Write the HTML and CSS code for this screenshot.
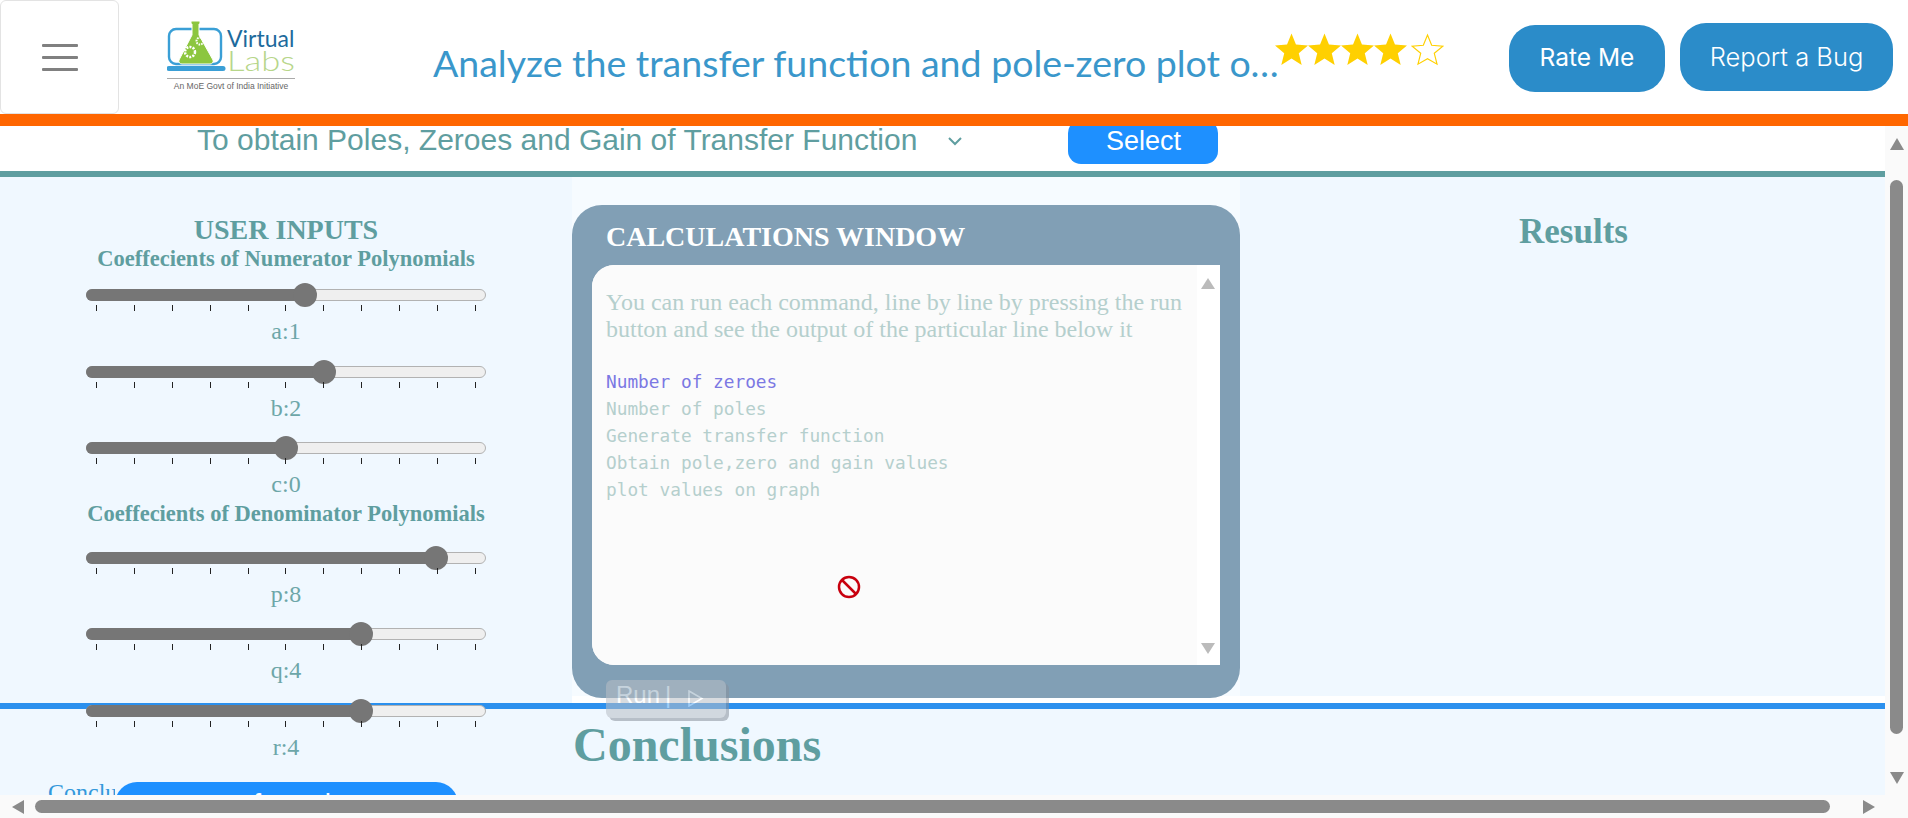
FILE: index.html
```html
<!DOCTYPE html>
<html lang="en">
<head>
    <meta charset="UTF-8">
    <meta name="viewport" content="width=device-width, initial-scale=1.0">
    <title>Virtual Labs</title>
    <link rel="stylesheet" href="styles.css">
</head>
<body>

    <header class="topbar">
        <button class="menu-btn" aria-label="Menu">
            <span></span><span></span><span></span>
        </button>
        <div class="logo">
            <svg width="132" height="72" viewBox="0 0 132 72">
                <rect x="2" y="8" width="52" height="35" rx="7" fill="none" stroke="#3a9fd6" stroke-width="2.4"/>
                <path d="M2 45h54a2.500 2.500 0 0 1 0 5H2a2.500 2.500 0 0 1 0-5z" fill="#3a9fd6"/>
                <path d="M24 0h9v3h-1v11l14 25a3 3 0 0 1-3 4H15a3 3 0 0 1-3-4l13-25V3h-1z" fill="#8cc63f" stroke="#fff" stroke-width="1"/>
                <circle cx="23" cy="31" r="5" fill="none" stroke="#fff" stroke-width="2.5" stroke-dasharray="2 1.2"/>
                <circle cx="33" cy="20" r="3.5" fill="none" stroke="#fff" stroke-width="2" stroke-dasharray="1.6 1"/>
                <text x="60" y="26" class="logo-virtual">Virtual</text>
                <text x="60" y="50" class="logo-labs" textLength="68" lengthAdjust="spacingAndGlyphs">Labs</text>
                <rect x="0" y="57" width="128" height="1" fill="#aaa"/>
                <text x="64" y="68" class="logo-tag">An MoE Govt of India Initiative</text>
            </svg>
        </div>
        <h1 class="exp-title">Analyze the transfer function and pole-zero plot of a system</h1>
        <div class="stars">
            <svg viewBox="0 0 34 33"><path class="star-full" d="M17 0l4.600 11.400 12.400 1-9.500 7.900 3 12.100L17 25.900 6.500 32.400l3-12.100L0 12.400l12.400-1z"/></svg>
            <svg viewBox="0 0 34 33"><path class="star-full" d="M17 0l4.600 11.400 12.400 1-9.500 7.900 3 12.100L17 25.900 6.500 32.400l3-12.100L0 12.400l12.400-1z"/></svg>
            <svg viewBox="0 0 34 33"><path class="star-full" d="M17 0l4.600 11.400 12.400 1-9.500 7.900 3 12.100L17 25.900 6.500 32.400l3-12.100L0 12.400l12.400-1z"/></svg>
            <svg viewBox="0 0 34 33"><path class="star-full" d="M17 0l4.600 11.400 12.400 1-9.500 7.900 3 12.100L17 25.900 6.500 32.400l3-12.100L0 12.400l12.400-1z"/></svg>
            <svg class="star-last" viewBox="0 0 34 33"><path class="star-empty" d="M17 1.500l4.300 10.600 11.500 1-8.800 7.300 2.800 11.200L17 26 7.200 31.600 10 20.400l-8.800-7.300 11.500-1z"/></svg>
        </div>
        <button class="top-btn rate-btn">Rate Me</button>
        <button class="top-btn bug-btn">Report a Bug</button>
    </header>
    <div class="orange-bar"></div>

    <div class="middle">
        <main class="content">
            <div class="pick-row">
                <div class="pick-text">To obtain Poles, Zeroes and Gain of Transfer Function</div>
                <svg class="pick-arrow" width="16" height="10" viewBox="0 0 16 10"><path d="M2 2l6 6 6-6" fill="none" stroke="#5f9ea0" stroke-width="2"/></svg>
                <button class="select-btn">Select</button>
            </div>

            <div class="lab">
                <section class="inputs">
                    <h2 class="inputs-title">USER INPUTS</h2>
                    <h3 class="inputs-sub">Coeffecients of Numerator Polynomials</h3>
                    <div class="slider-box">
                        <div class="track"><input class="slider" type="range" min="-10" max="10" value="1" style="--fill:55%"></div>
                        <div class="ticks"><i></i><i></i><i></i><i></i><i></i><i></i><i></i><i></i><i></i><i></i><i></i></div>
                        <div class="slider-label">a:1</div>
                    </div>
                    <div class="slider-box">
                        <div class="track"><input class="slider" type="range" min="-10" max="10" value="2" style="--fill:60%"></div>
                        <div class="ticks"><i></i><i></i><i></i><i></i><i></i><i></i><i></i><i></i><i></i><i></i><i></i></div>
                        <div class="slider-label">b:2</div>
                    </div>
                    <div class="slider-box">
                        <div class="track"><input class="slider" type="range" min="-10" max="10" value="0" style="--fill:50%"></div>
                        <div class="ticks"><i></i><i></i><i></i><i></i><i></i><i></i><i></i><i></i><i></i><i></i><i></i></div>
                        <div class="slider-label">c:0</div>
                    </div>
                    <h3 class="inputs-sub inputs-sub-den">Coeffecients of Denominator Polynomials</h3>
                    <div class="slider-box">
                        <div class="track"><input class="slider" type="range" min="-10" max="10" value="8" style="--fill:90%"></div>
                        <div class="ticks"><i></i><i></i><i></i><i></i><i></i><i></i><i></i><i></i><i></i><i></i><i></i></div>
                        <div class="slider-label">p:8</div>
                    </div>
                    <div class="slider-box">
                        <div class="track"><input class="slider" type="range" min="-10" max="10" value="4" style="--fill:70%"></div>
                        <div class="ticks"><i></i><i></i><i></i><i></i><i></i><i></i><i></i><i></i><i></i><i></i><i></i></div>
                        <div class="slider-label">q:4</div>
                    </div>
                    <div class="slider-box">
                        <div class="track"><input class="slider" type="range" min="-10" max="10" value="4" style="--fill:70%"></div>
                        <div class="ticks"><i></i><i></i><i></i><i></i><i></i><i></i><i></i><i></i><i></i><i></i><i></i></div>
                        <div class="slider-label">r:4</div>
                    </div>
                    <div class="conclude-row">
                        <span class="conclude-link">Conclusions</span>
                        <button class="conclude-btn">use formula</button>
                    </div>
                </section>

                <section class="calc-col">
                    <div class="calc-window">
                        <h2 class="calc-title">CALCULATIONS WINDOW</h2>
                        <div class="calc-inner">
                            <div class="calc-text">
                                <p class="calc-hint">You can run each command, line by line by pressing the run button and see the output of the particular line below it</p>
                                <code class="calc-line calc-line-on">Number of zeroes</code>
                                <code class="calc-line">Number of poles</code>
                                <code class="calc-line">Generate transfer function</code>
                                <code class="calc-line">Obtain pole,zero and gain values</code>
                                <code class="calc-line">plot values on graph</code>
                                <div class="calc-block">
                                    <svg width="24" height="24" viewBox="0 0 24 24"><circle cx="12" cy="12" r="10" fill="none" stroke="#c8000e" stroke-width="2.5"/><path d="M5 5l14 14" stroke="#c8000e" stroke-width="2.500"/></svg>
                                </div>
                            </div>
                            <div class="calc-scroll">
                                <svg width="14" height="11" viewBox="0 0 14 11"><path d="M7 0l7 11H0z" fill="#bbb"/></svg>
                                <svg width="14" height="11" viewBox="0 0 14 11"><path d="M7 11L0 0h14z" fill="#bbb"/></svg>
                            </div>
                        </div>
                        <button class="run-btn">
                            <span>Run</span>
                            <span class="run-sep">|</span>
                            <svg class="run-icon" width="16" height="17" viewBox="0 0 16 17"><path d="M1 1l13 7.500-13 7.500z" fill="none" stroke="#fff" stroke-width="1.500"/></svg>
                        </button>
                    </div>
                </section>

                <section class="results">
                    <h2 class="results-title">Results</h2>
                </section>
            </div>

            <div class="blue-line"></div>
            <div class="lower">
                <h2 class="conclusions">Conclusions</h2>
            </div>
        </main>

        <aside class="vbar">
            <svg width="14" height="12" viewBox="0 0 14 12"><path d="M7 0l7 12H0z" fill="#8a8a8a"/></svg>
            <div class="vbar-thumb"></div>
            <svg width="14" height="12" viewBox="0 0 14 12"><path d="M7 12L0 0h14z" fill="#8a8a8a"/></svg>
        </aside>
    </div>

    <div class="hbar">
        <svg width="12" height="14" viewBox="0 0 12 14"><path d="M0 7l12-7v14z" fill="#8a8a8a"/></svg>
        <div class="hbar-thumb"></div>
        <svg width="12" height="14" viewBox="0 0 12 14"><path d="M12 7L0 0v14z" fill="#8a8a8a"/></svg>
    </div>

</body>
</html>
```

FILE: styles.css
```css
* {
    box-sizing: border-box;
}
html, body {
    margin: 0;
    height: 818px;
    overflow: hidden;
}
body {
    display: flex;
    flex-direction: column;
    font-family: "Liberation Serif", "Times New Roman", serif;
    background-color: white;
}
button {
    border: none;
    cursor: pointer;
}

/* top bar */
.topbar {
    position: relative;
    z-index: 5;
    display: flex;
    align-items: center;
    height: 114px;
    background-color: white;
}
.menu-btn {
    display: flex;
    flex-direction: column;
    justify-content: center;
    align-items: center;
    gap: 9px;
    flex: none;
    width: 119px;
    height: 114px;
    background-color: white;
    border: 1px solid #e3e3e3;
    border-radius: 6px;
}
.menu-btn span {
    width: 36px;
    height: 3px;
    background-color: #808080;
    border-radius: 1px;
}
.logo {
    flex: none;
    width: 131px;
    height: 72px;
    margin-left: 48px;
}
.logo-virtual {
    font-family: "Lato", sans-serif;
    font-size: 23px;
    fill: #1d6a9c;
}
.logo-labs {
    font-family: "Lato", sans-serif;
    font-weight: 300;
    font-size: 27px;
    fill: #b7d68a;
}
.logo-tag {
    font-family: "Liberation Sans", sans-serif;
    font-size: 8.500px;
    fill: #666;
    text-anchor: middle;
}
.exp-title {
    flex: none;
    width: 846px;
    margin: 10px 0 0 135px;
    font-family: "Lato", sans-serif;
    font-size: 37.500px;
    font-weight: 400;
    color: #3a97cb;
    white-space: nowrap;
    overflow: hidden;
    text-overflow: ellipsis;
}
.stars {
    display: flex;
    flex: none;
    width: 170px;
    margin: -15px 0 0 -4px;
}
.stars svg {
    flex: none;
    width: 33px;
    height: 33px;
}
.stars .star-last {
    margin-left: 4px;
}
.star-full {
    fill: #ffd000;
}
.star-empty {
    fill: white;
    stroke: #ffd000;
    stroke-width: 1.2;
}
.top-btn {
    flex: none;
    font-family: "Inter", sans-serif;
    color: white;
    background-color: #2b8cc9;
    border-radius: 26px;
}
.rate-btn {
    width: 156px;
    height: 67px;
    margin: 2px 0 0 64px;
    padding-bottom: 3px;
    font-size: 24.500px;
}
.bug-btn {
    width: 213px;
    height: 68px;
    margin: 0 0 0 15px;
    padding-bottom: 3px;
    font-size: 25.500px;
    font-weight: 300;
}
.orange-bar {
    position: relative;
    z-index: 5;
    flex: none;
    height: 12px;
    background-color: #ff6600;
}

/* middle */
.middle {
    display: flex;
    flex: none;
    height: 669px;
}
.content {
    flex: none;
    width: 1885px;
    overflow: hidden;
}
.pick-row {
    display: flex;
    align-items: flex-start;
    height: 51px;
    padding-left: 197px;
    border-bottom: 6px solid #5f9ea0;
}
.pick-text {
    margin-top: -3px;
    font-family: "Liberation Sans", Arial, sans-serif;
    font-size: 30px;
    color: #5f9ea0;
    white-space: nowrap;
}
.pick-arrow {
    margin: 10px 0 0 30px;
}
.select-btn {
    width: 150px;
    height: 44px;
    margin: -6px 0 0 105px;
    padding-bottom: 3px;
    font-family: "Liberation Sans", Arial, sans-serif;
    font-size: 27px;
    color: white;
    background-color: #1e90ff;
    border-radius: 13px;
}

.lab {
    display: flex;
    height: 526px;
    background: linear-gradient(to right, aliceblue 572px, white 572px);
}
.inputs {
    position: relative;
    z-index: 2;
    flex: none;
    width: 572px;
    height: 618px;
    padding-top: 37px;
    text-align: center;
    color: #5f9ea0;
}
.inputs-title {
    margin: 0;
    font-size: 28px;
    line-height: 32px;
}
.inputs-sub {
    margin: 0 0 8px;
    font-size: 22.500px;
    line-height: 26px;
    white-space: nowrap;
}
.inputs-sub-den {
    margin: -8.600px 0 15.800px;
}
.slider-box {
    width: 400px;
    height: 76.500px;
    margin: 0 auto;
    padding-top: 9px;
}
.track {
    height: 12px;
    border: 1px solid #b2b2b2;
    border-radius: 6px;
    background-color: #efefef;
}
.slider {
    -webkit-appearance: none;
    appearance: none;
    display: block;
    width: calc(100% + 2px);
    height: 12px;
    margin: -1px;
    border-radius: 6px;
    background: linear-gradient(to right, #767676 var(--fill), transparent var(--fill));
}
.slider::-webkit-slider-thumb {
    -webkit-appearance: none;
    appearance: none;
    width: 24px;
    height: 24px;
    border-radius: 50%;
    background-color: #767676;
}
.ticks {
    display: flex;
    justify-content: space-between;
    padding: 0 10px;
    margin-top: 4px;
}
.ticks i {
    width: 1px;
    height: 6px;
    background-color: #222;
}
.slider-label {
    margin-top: 7px;
    font-size: 24px;
    line-height: 26px;
    opacity: 0.9;
}
.conclude-row {
    display: flex;
    margin: 10px 0 0 48px;
    font-size: 24px;
}
.conclude-link {
    width: 67px;
    margin-top: -3px;
    overflow: hidden;
    color: #3498db;
    white-space: nowrap;
}
.conclude-btn {
    width: 343px;
    height: 44px;
    padding-right: 32px;
    font-family: "Liberation Sans", Arial, sans-serif;
    font-size: 28px;
    color: white;
    background-color: #1e90ff;
    border-radius: 24px;
}

.calc-col {
    position: relative;
    z-index: 3;
    flex: none;
    width: 668px;
    height: 519px;
    background-color: #f6fbff;
}
.calc-window {
    position: absolute;
    top: 28px;
    left: 0;
    width: 668px;
    height: 493px;
    padding: 14px 20px 0;
    background-color: #819fb5;
    border-radius: 30px;
}
.calc-title {
    margin: 0 0 10px 14px;
    font-size: 28px;
    line-height: 36px;
    color: white;
}
.calc-inner {
    display: flex;
    height: 400px;
    background-color: white;
    border-radius: 22px 0 0 22px;
}
.calc-text {
    position: relative;
    flex: none;
    width: 605px;
    padding: 24px 14px 0;
    background-color: #fbfbfb;
    border-radius: 22px 0 0 22px;
}
.calc-hint {
    margin: 0 0 25px;
    font-size: 24px;
    line-height: 27px;
    color: #b5cfcd;
}
.calc-line {
    display: block;
    font-family: "DejaVu Sans Mono", monospace;
    font-size: 17.800px;
    line-height: 27px;
    color: #b5cfcd;
}
.calc-line-on {
    color: #7b78e3;
}
.calc-block {
    position: absolute;
    left: 245px;
    top: 310px;
}
.calc-scroll {
    display: flex;
    flex-direction: column;
    justify-content: space-between;
    flex: none;
    width: 23px;
    padding: 13px 0 11px 4px;
}
.run-btn {
    position: absolute;
    left: 34px;
    top: 475px;
    display: flex;
    align-items: center;
    gap: 5px;
    width: 120px;
    height: 38px;
    padding: 0 0 8px 10px;
    font-family: "Liberation Sans", Arial, sans-serif;
    font-size: 24px;
    color: white;
    background-color: #b9bec6;
    border-radius: 6px;
    box-shadow: 3px 3px 0 #8a919c;
    opacity: 0.55;
}
.run-icon {
    margin: 6px 0 0 12px;
}

.results {
    flex: none;
    width: 645px;
    height: 519px;
    padding-left: 22px;
    background-color: aliceblue;
    text-align: center;
}
.results-title {
    margin: 36px 0 0;
    font-size: 35px;
    line-height: 38px;
    color: #5f9ea0;
}

.blue-line {
    height: 6px;
    background-color: #2b90ee;
}
.lower {
    height: 86px;
    padding: 8px 0 0 573px;
    background-color: aliceblue;
}
.conclusions {
    margin: 0;
    font-size: 48px;
    line-height: 56px;
    color: #5f9ea0;
}

/* fake page scrollbars */
.vbar {
    display: flex;
    flex-direction: column;
    align-items: center;
    flex: none;
    width: 23px;
    padding: 12px 0 0;
    background-color: #fafafa;
}
.vbar-thumb {
    width: 13px;
    height: 554px;
    margin: 30px 0 38px;
    background-color: #8a8a8a;
    border-radius: 7px;
}
.hbar {
    display: flex;
    align-items: center;
    flex: none;
    height: 23px;
    padding: 0 33px 0 12px;
    background-color: #fafafa;
}
.hbar-thumb {
    width: 1795px;
    height: 13px;
    margin: 0 33px 0 11px;
    background-color: #8a8a8a;
    border-radius: 7px;
}
```
